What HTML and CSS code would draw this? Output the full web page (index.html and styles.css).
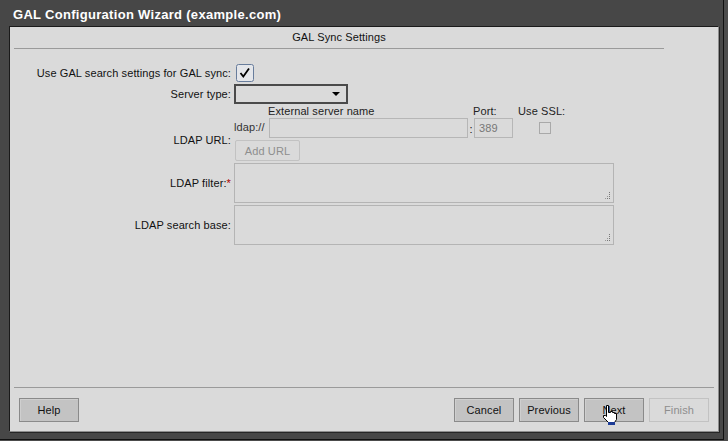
FILE: index.html
```html
<!DOCTYPE html>
<html lang="en">
<head>
<meta charset="UTF-8">
<title>GAL Configuration Wizard</title>
<link rel="stylesheet" href="styles.css">
</head>
<body>

<div class="window">
  <div class="titlebar">GAL Configuration Wizard (example.com)</div>

  <div class="panel">
    <div class="section-head">GAL Sync Settings</div>

    <div class="form">
      <div class="row row-check">
        <div class="lbl">Use GAL search settings for GAL sync:</div>
        <div class="field">
          <svg class="sync-box" width="18" height="18" viewBox="0 0 18 18">
            <rect x="0.5" y="0.5" width="17" height="17" rx="2" fill="#e4e6ea" stroke="#687d9c"/>
            <path d="M4.5 9 L7.3 12.5 L13 4.5" fill="none" stroke="#000" stroke-width="1.8"/>
          </svg>
        </div>
      </div>

      <div class="row row-select">
        <div class="lbl">Server type:</div>
        <div class="field">
          <div class="select"><span class="arrow"></span></div>
        </div>
      </div>

      <div class="row row-url">
        <div class="lbl">LDAP URL:</div>
        <div class="field url-field">
          <div class="url-heads">
            <span class="h-name">External server name</span>
            <span class="h-port">Port:</span>
            <span class="h-ssl">Use SSL:</span>
          </div>
          <div class="url-inputs">
            <span class="proto">ldap://</span>
            <div class="input input-host"></div>
            <span class="colon">:</span>
            <div class="input input-port">389</div>
            <div class="ssl"><span class="small-box"></span></div>
          </div>
          <div><button class="btn btn-add" disabled>Add URL</button></div>
        </div>
      </div>

      <div class="row row-area">
        <div class="lbl">LDAP filter:<span class="req">*</span></div>
        <div class="field">
          <div class="textarea">
            <svg class="grip" width="9" height="9" viewBox="0 0 9 9">
              <rect x="7" y="1" width="1" height="1" fill="#777"/>
              <rect x="7" y="3" width="1" height="1" fill="#777"/>
              <rect x="5" y="5" width="1" height="1" fill="#999"/>
              <rect x="7" y="5" width="1" height="1" fill="#777"/>
              <rect x="3" y="7" width="1" height="1" fill="#999"/>
              <rect x="5" y="7" width="1" height="1" fill="#777"/>
              <rect x="7" y="7" width="1" height="1" fill="#777"/>
            </svg>
          </div>
        </div>
      </div>

      <div class="row row-area">
        <div class="lbl">LDAP search base:</div>
        <div class="field">
          <div class="textarea">
            <svg class="grip" width="9" height="9" viewBox="0 0 9 9">
              <rect x="7" y="1" width="1" height="1" fill="#777"/>
              <rect x="7" y="3" width="1" height="1" fill="#777"/>
              <rect x="5" y="5" width="1" height="1" fill="#999"/>
              <rect x="7" y="5" width="1" height="1" fill="#777"/>
              <rect x="3" y="7" width="1" height="1" fill="#999"/>
              <rect x="5" y="7" width="1" height="1" fill="#777"/>
              <rect x="7" y="7" width="1" height="1" fill="#777"/>
            </svg>
          </div>
        </div>
      </div>
    </div>

    <div class="footer">
      <button class="btn">Help</button>
      <div class="spacer"></div>
      <button class="btn">Cancel</button>
      <button class="btn">Previous</button>
      <button class="btn btn-next">Next
        <!-- mouse pointer sitting over the button -->
        <svg class="cursor" width="16" height="20" viewBox="0 0 16 20">
          <path d="M4.5 0.5 H6.5 V7.5 H8.5 V6.5 H10.5 V7.5 H12.5 V8.5 H14.5 V14.5 L12.5 17.5 H6.5 L1.5 12.5 V10.5 H3.5 L4.5 11.5 Z" fill="#fff" stroke="#000"/>
          <rect x="6" y="17" width="7" height="3" fill="#1d3c96"/>
        </svg>
      </button>
      <button class="btn" disabled>Finish</button>
    </div>
  </div>
</div>

</body>
</html>
```

FILE: styles.css
```css
body {
  margin: 0;
  background-color: #4c4c4c;
  font-family: "Liberation Sans", Arial, sans-serif;
  font-size: 11px;
  letter-spacing: 0.1px;
  color: #111;
}
.window {
  width: 723px;
  height: 439px;
  background-color: #474747;
  border-right: 1px solid #111;
  border-bottom: 1px solid #111;
  display: flex;
  flex-direction: column;
}
.titlebar {
  height: 22px;
  padding: 4px 0 0 13px;
  line-height: 22px;
  color: #fff;
  font-size: 13px;
  font-weight: bold;
  letter-spacing: 0.3px;
}
.panel {
  margin: 0 4px 0 9px;
  height: 404px;
  background-color: #dadada;
  border-top: 1px solid #1a1a1a;
  border-left: 1px solid #1a1a1a;
  border-right: 1px solid #8e8e8e;
  border-bottom: 1px solid #8e8e8e;
  box-shadow: 1px 1px 0 #262626;
  display: flex;
  flex-direction: column;
}
.section-head {
  margin: 0 54px 0 4px;
  height: 21px;
  line-height: 21px;
  text-align: center;
  border-bottom: 1px solid #9a9a9a;
  color: #111;
}
.form {
  margin-top: 15px;
  display: flex;
  flex-direction: column;
}
.row {
  display: flex;
}
.lbl {
  width: 221px;
  padding-right: 3px;
  text-align: right;
  display: flex;
  align-items: center;
  justify-content: flex-end;
}
.field {
  display: flex;
  align-items: center;
}
.row-check {
  height: 18px;
}
.sync-box {
  flex: none;
  margin-left: 2px;
}
.row-select {
  height: 20px;
  margin-top: 2px;
}
.select {
  width: 104px;
  height: 16px;
  border: 2px solid #4a4a4a;
  display: flex;
  align-items: center;
  justify-content: flex-end;
  padding-right: 6px;
}
.arrow {
  width: 0;
  height: 0;
  border-left: 4px solid transparent;
  border-right: 4px solid transparent;
  border-top: 4px solid #000;
}
.row-url {
  margin-top: 1px;
}
.row-url .lbl {
  padding-top: 14px;
}
.url-field {
  flex-direction: column;
  align-items: flex-start;
}
.url-heads {
  height: 12px;
  line-height: 12px;
  display: flex;
  color: #222;
}
.h-name {
  margin-left: 34px;
  width: 205px;
}
.h-port {
  width: 45px;
}
.url-inputs {
  margin-top: 1px;
  height: 20px;
  display: flex;
  align-items: center;
}
.proto {
  width: 35px;
  color: #333;
  align-self: flex-start;
  margin-top: 3px;
}
.input {
  height: 18px;
  border: 1px solid #b6b6b6;
  line-height: 18px;
  box-sizing: content-box;
}
.input-host {
  width: 197px;
}
.colon {
  width: 6px;
  text-align: center;
  align-self: flex-end;
  margin-bottom: 3px;
}
.input-port {
  width: 33px;
  padding-left: 4px;
  color: #777;
}
.ssl {
  width: 55px;
  display: flex;
  justify-content: center;
  padding-left: 4px;
}
.small-box {
  width: 10px;
  height: 10px;
  border: 1px solid #a9a9a9;
  background-color: #dcdcdc;
}
.btn {
  width: 60px;
  height: 24px;
  padding: 0;
  font-family: "Liberation Sans", Arial, sans-serif;
  font-size: 11px;
  letter-spacing: 0.1px;
  color: #111;
  background-color: #c3c3c3;
  border: 1px solid #8a8a8a;
  box-shadow: inset 1px 1px 0 #cfcfcf;
}
.btn:disabled {
  background-color: #dadada;
  border-color: #c2c2c2;
  box-shadow: none;
  color: #8e8e8e;
}
.btn-add {
  margin-top: 2px;
  margin-left: 1px;
  width: 65px;
  height: 21px;
  border-radius: 2px;
  color: #9a9a9a;
}
.row-area {
  margin-top: 2px;
  height: 40px;
}
.textarea {
  position: relative;
  width: 378px;
  height: 38px;
  border: 1px solid #b4b4b4;
}
.grip {
  position: absolute;
  right: 2px;
  bottom: 2px;
}
.req {
  color: #a00;
}
.footer {
  margin-top: auto;
  margin-left: 4px;
  margin-right: 4px;
  padding: 10px 5px 9px 5px;
  border-top: 1px solid #9a9a9a;
  display: flex;
  gap: 5px;
}
.spacer {
  flex: 1;
}
.btn-next {
  position: relative;
}
.cursor {
  position: absolute;
  left: 17px;
  top: 6px;
}
```
